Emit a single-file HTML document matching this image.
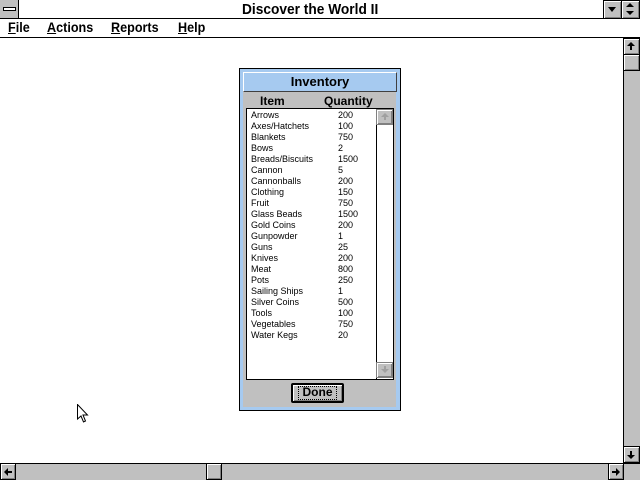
<!DOCTYPE html>
<html><head><style>
*{margin:0;padding:0;box-sizing:border-box}
body{width:640px;height:480px;overflow:hidden;background:#fff;font-family:"Liberation Sans",sans-serif;position:relative}
.a{position:absolute}
.btn{position:absolute;background:#c0c0c0;border:1px solid #000;box-shadow:inset 1px 1px 0 #fff,inset -1px -1px 0 #808080}
.row{position:absolute;left:251px;font-size:9px;line-height:11px;color:#000}
.q{position:absolute;left:338px;font-size:9px;line-height:11px}
.m{position:absolute;top:19px;font-size:14px;font-weight:bold;line-height:17px;transform:scaleX(0.9);transform-origin:0 0}
</style></head><body>
<!-- title bar -->
<div class="a" style="left:0;top:0;width:640px;height:19px;border-bottom:1px solid #000;background:#fff"></div>
<div class="btn" style="left:0;top:0;width:19px;height:19px;box-shadow:none;border-width:0 1px 1px 0"></div>
<div class="a" style="left:3px;top:7px;width:13px;height:4px;border:1px solid #000;background:#fff"></div>
<div class="a" style="left:242px;top:1px;font-size:15px;font-weight:bold;line-height:17px;transform:scaleX(0.915);transform-origin:0 0;white-space:nowrap">Discover the World II</div>
<div class="btn" style="left:603px;top:0;width:19px;height:19px"></div>
<div class="a" style="left:608px;top:7px;width:0;height:0;border-left:4px solid transparent;border-right:4px solid transparent;border-top:5px solid #000"></div>
<div class="btn" style="left:621px;top:0;width:19px;height:19px"></div>
<div class="a" style="left:626px;top:3px;width:0;height:0;border-left:4px solid transparent;border-right:4px solid transparent;border-bottom:4px solid #000"></div>
<div class="a" style="left:626px;top:11px;width:0;height:0;border-left:4px solid transparent;border-right:4px solid transparent;border-top:4px solid #000"></div>
<!-- menu -->
<div class="a" style="left:0;top:37px;width:640px;height:1px;background:#000"></div>
<div class="m" style="left:8px"><u>F</u>ile</div>
<div class="m" style="left:47px"><u>A</u>ctions</div>
<div class="m" style="left:111px"><u>R</u>eports</div>
<div class="m" style="left:178px"><u>H</u>elp</div>
<!-- vertical scrollbar -->
<div class="a" style="left:623px;top:38px;width:17px;height:425px;background:#c0c0c0;border-left:1px solid #000"></div>
<div class="btn" style="left:623px;top:38px;width:17px;height:17px"></div>
<div class="a" style="left:627px;top:42px;border-left:4px solid transparent;border-right:4px solid transparent;border-bottom:4px solid #000"></div>
<div class="a" style="left:630px;top:46px;width:2px;height:4px;background:#000"></div>
<div class="btn" style="left:623px;top:54px;width:17px;height:17px"></div>
<div class="btn" style="left:623px;top:446px;width:17px;height:17px"></div>
<div class="a" style="left:630px;top:451px;width:2px;height:4px;background:#000"></div>
<div class="a" style="left:627px;top:455px;border-left:4px solid transparent;border-right:4px solid transparent;border-top:4px solid #000"></div>
<!-- horizontal scrollbar -->
<div class="a" style="left:0;top:463px;width:640px;height:17px;background:#c0c0c0;border-top:1px solid #000"></div>
<div class="btn" style="left:0;top:463px;width:16px;height:17px"></div>
<div class="btn" style="left:206px;top:463px;width:16px;height:17px"></div>
<div class="btn" style="left:608px;top:463px;width:16px;height:17px"></div>
<div class="a" style="left:623px;top:463px;width:1px;height:17px;background:#000"></div>
<div class="a" style="left:4px;top:468px;border-top:4px solid transparent;border-bottom:4px solid transparent;border-right:4px solid #000"></div>
<div class="a" style="left:8px;top:471px;width:4px;height:2px;background:#000"></div>
<div class="a" style="left:612px;top:471px;width:4px;height:2px;background:#000"></div>
<div class="a" style="left:616px;top:468px;border-top:4px solid transparent;border-bottom:4px solid transparent;border-left:4px solid #000"></div>
<!-- dialog -->
<div class="a" style="left:239px;top:68px;width:162px;height:343px;background:#a6caf0;border:1px solid #000"></div>
<div class="a" style="left:243px;top:72px;width:154px;height:20px;background:#a6caf0;border:1px solid #fff;border-right-color:#404040;border-bottom-color:#404040"></div>
<div class="a" style="left:243px;top:74px;width:154px;text-align:center;font-size:13px;font-weight:bold;line-height:16px">Inventory</div>
<div class="a" style="left:243px;top:92px;width:153px;height:315px;background:#c0c0c0"></div>
<div class="a" style="left:260px;top:94px;font-size:12px;font-weight:bold;line-height:14px">Item</div>
<div class="a" style="left:324px;top:94px;font-size:12px;font-weight:bold;line-height:14px">Quantity</div>
<div class="a" style="left:246px;top:108px;width:148px;height:272px;background:#fff;border:1px solid #000"></div>
<div class="a" style="left:376px;top:109px;width:17px;height:270px;background:#fff;border-left:1px solid #000"></div>
<div class="btn" style="left:376px;top:109px;width:17px;height:16px;border-color:#808080"></div>
<div class="btn" style="left:376px;top:362px;width:17px;height:16px;border-color:#808080"></div>
<div class="a" style="left:381px;top:113px;border-left:4px solid transparent;border-right:4px solid transparent;border-bottom:4px solid #a0a0a0"></div>
<div class="a" style="left:384px;top:117px;width:2px;height:3px;background:#a0a0a0"></div>
<div class="a" style="left:384px;top:366px;width:2px;height:3px;background:#a0a0a0"></div>
<div class="a" style="left:381px;top:369px;border-left:4px solid transparent;border-right:4px solid transparent;border-top:4px solid #a0a0a0"></div>
<div class="row" style="top:110px">Arrows<br>Axes/Hatchets<br>Blankets<br>Bows<br>Breads/Biscuits<br>Cannon<br>Cannonballs<br>Clothing<br>Fruit<br>Glass Beads<br>Gold Coins<br>Gunpowder<br>Guns<br>Knives<br>Meat<br>Pots<br>Sailing Ships<br>Silver Coins<br>Tools<br>Vegetables<br>Water Kegs</div>
<div class="q" style="top:110px">200<br>100<br>750<br>2<br>1500<br>5<br>200<br>150<br>750<br>1500<br>200<br>1<br>25<br>200<br>800<br>250<br>1<br>500<br>100<br>750<br>20</div>
<div class="a" style="left:291px;top:383px;width:53px;height:20px;background:#c0c0c0;border:2px solid #000;border-radius:2px;box-shadow:inset 1px 1px 0 #fff,inset -1px -1px 0 #808080"></div>
<div class="a" style="left:298px;top:386px;width:39px;height:14px;border:1px dotted #000"></div>
<div class="a" style="left:291px;top:385px;width:53px;text-align:center;font-size:12px;font-weight:bold;line-height:15px">Done</div>
<!-- cursor -->
<svg class="a" style="left:77px;top:404px" width="12" height="20" viewBox="0 0 12 20"><path d="M0.5 0.5 L0.5 15 L4 12 L6.5 18 L8.5 17 L6 11 L10.5 11 Z" fill="#fff" stroke="#000"/></svg>
</body></html>
